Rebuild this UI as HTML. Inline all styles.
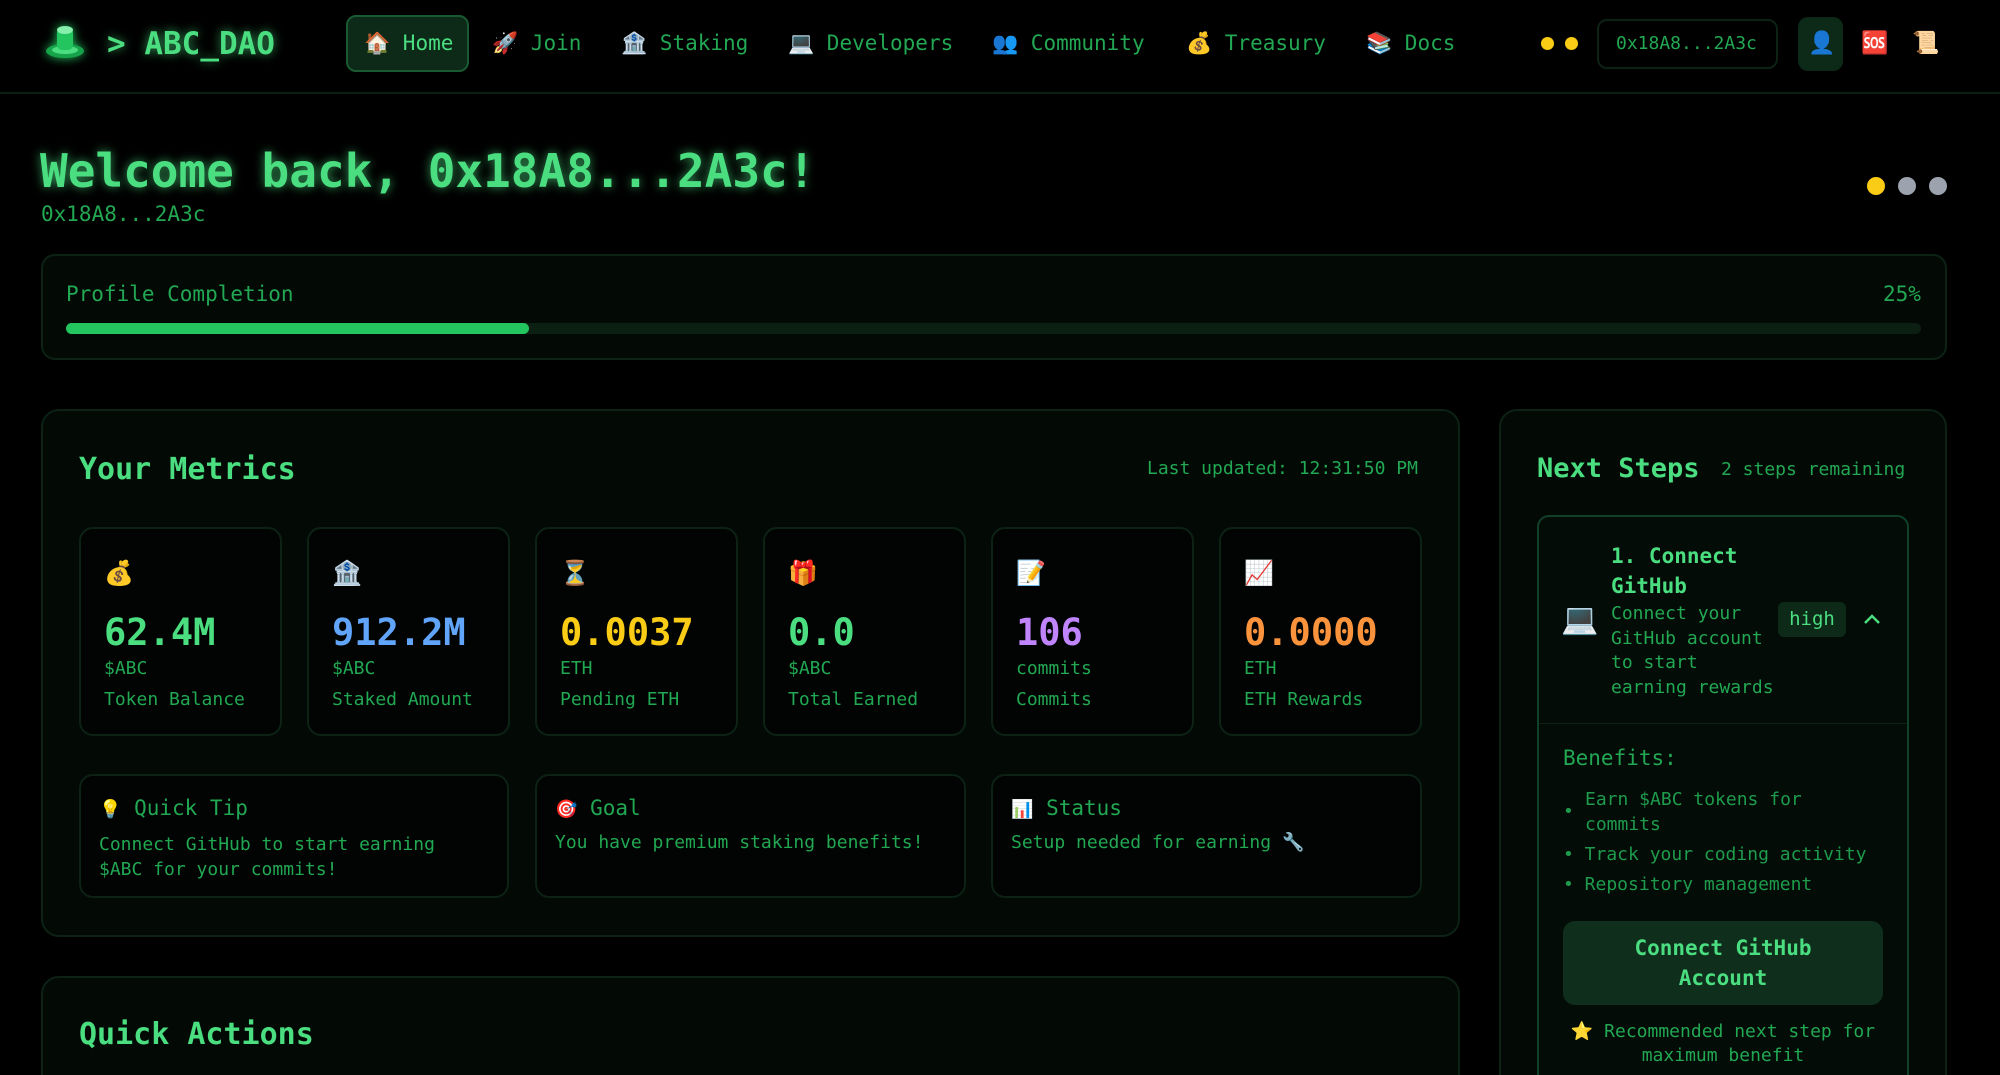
<!DOCTYPE html>
<html><head><meta charset="utf-8"><style>
*{box-sizing:border-box;margin:0;padding:0}
html{width:2000px;height:1075px;overflow:hidden}
body{width:2000px;height:1075px;overflow:hidden;background:#000;font-family:"DejaVu Sans Mono","Liberation Mono",monospace;color:#22a853;position:relative}
.a{position:absolute;white-space:nowrap}
.card{position:absolute;background:#030a06;border:2px solid #0c2215;border-radius:18px}
.tile{position:absolute;background:#010402;border:2px solid #0c2215;border-radius:14px}
.nav{font-size:21px;color:#22a853;top:31px}
.em{font-family:"Noto Color Emoji","DejaVu Sans",sans-serif}
.glow{color:#4ade80;text-shadow:0 0 10px rgba(74,222,128,.7)}
</style></head><body>
<div class="a" style="left:0;top:92px;width:2000px;height:2px;background:#0b1f12"></div>
<svg class="a" style="left:44px;top:24px;filter:drop-shadow(0 0 5px #22c55e)" width="44" height="36" viewBox="0 0 44 36"><ellipse cx="21" cy="27" rx="19" ry="7" fill="#16a34a"/><ellipse cx="21" cy="26" rx="13" ry="4" fill="#4ade80"/><rect x="13" y="4" width="16" height="22" rx="5" fill="#22c55e"/><ellipse cx="21" cy="6" rx="8" ry="4" fill="#86efac"/></svg>
<div class="a glow" style="left:107px;top:26px;font-size:31px;font-weight:bold">&gt; ABC_DAO</div>
<div class="a" style="left:346px;top:15px;width:123px;height:57px;background:#0d2a18;border:2px solid #1a5a32;border-radius:10px"></div>
<div class="a nav" style="left:364px;color:#4ade80"><span class="em">🏠</span> Home</div>
<div class="a nav" style="left:492px"><span class="em">🚀</span> Join</div>
<div class="a nav" style="left:621px"><span class="em">🏦</span> Staking</div>
<div class="a nav" style="left:788px"><span class="em">💻</span> Developers</div>
<div class="a nav" style="left:992px"><span class="em">👥</span> Community</div>
<div class="a nav" style="left:1186px"><span class="em">💰</span> Treasury</div>
<div class="a nav" style="left:1366px"><span class="em">📚</span> Docs</div>
<div class="a" style="left:1541px;top:37px;width:13px;height:13px;border-radius:50%;background:#facc15"></div>
<div class="a" style="left:1565px;top:37px;width:13px;height:13px;border-radius:50%;background:#facc15"></div>
<div class="a" style="left:1597px;top:19px;width:181px;height:50px;border:2px solid #0c2215;border-radius:10px"></div>
<div class="a" style="left:1616px;top:33px;font-size:18px;color:#22a853">0x18A8...2A3c</div>
<div class="a" style="left:1798px;top:17px;width:45px;height:54px;background:#0d2a18;border-radius:10px"></div>
<div class="a em" style="left:1808px;top:31px;font-size:22px">👤</div>
<div class="a em" style="left:1861px;top:31px;font-size:22px">🆘</div>
<div class="a em" style="left:1912px;top:31px;font-size:22px">📜</div>

<div class="a glow" style="left:40px;top:144px;font-size:46px;font-weight:bold">Welcome back, 0x18A8...2A3c!</div>
<div class="a" style="left:41px;top:202px;font-size:21px">0x18A8...2A3c</div>
<div class="a" style="left:1867px;top:177px;width:18px;height:18px;border-radius:50%;background:#facc15"></div>
<div class="a" style="left:1898px;top:177px;width:18px;height:18px;border-radius:50%;background:#9ca3af"></div>
<div class="a" style="left:1929px;top:177px;width:18px;height:18px;border-radius:50%;background:#9ca3af"></div>

<div class="card" style="left:41px;top:254px;width:1906px;height:106px;border-radius:14px"></div>
<div class="a" style="left:66px;top:282px;font-size:21px">Profile Completion</div>
<div class="a" style="left:1883px;top:282px;font-size:21px">25%</div>
<div class="a" style="left:66px;top:323px;width:1855px;height:11px;background:#0b1f12;border-radius:6px"></div>
<div class="a" style="left:66px;top:323px;width:463px;height:11px;background:#22c55e;border-radius:6px"></div>

<div class="card" style="left:41px;top:409px;width:1419px;height:528px"></div>
<div class="a" style="left:79px;top:452px;font-size:30px;font-weight:bold;color:#4ade80">Your Metrics</div>
<div class="a" style="left:1147px;top:458px;font-size:18px">Last updated: 12:31:50 PM</div>

<div class="tile" style="left:79px;top:527px;width:203px;height:209px"></div>
<div class="tile" style="left:307px;top:527px;width:203px;height:209px"></div>
<div class="tile" style="left:535px;top:527px;width:203px;height:209px"></div>
<div class="tile" style="left:763px;top:527px;width:203px;height:209px"></div>
<div class="tile" style="left:991px;top:527px;width:203px;height:209px"></div>
<div class="tile" style="left:1219px;top:527px;width:203px;height:209px"></div>

<div class="a em" style="left:104px;top:559px;font-size:24px">💰</div>
<div class="a" style="left:104px;top:611px;font-size:37px;font-weight:bold;color:#4ade80">62.4M</div>
<div class="a" style="left:104px;top:658px;font-size:18px">$ABC</div>
<div class="a" style="left:104px;top:689px;font-size:18px">Token Balance</div>

<div class="a em" style="left:332px;top:559px;font-size:24px">🏦</div>
<div class="a" style="left:332px;top:611px;font-size:37px;font-weight:bold;color:#60a5fa">912.2M</div>
<div class="a" style="left:332px;top:658px;font-size:18px">$ABC</div>
<div class="a" style="left:332px;top:689px;font-size:18px">Staked Amount</div>

<div class="a em" style="left:560px;top:559px;font-size:24px">⏳</div>
<div class="a" style="left:560px;top:611px;font-size:37px;font-weight:bold;color:#facc15">0.0037</div>
<div class="a" style="left:560px;top:658px;font-size:18px">ETH</div>
<div class="a" style="left:560px;top:689px;font-size:18px">Pending ETH</div>

<div class="a em" style="left:788px;top:559px;font-size:24px">🎁</div>
<div class="a" style="left:788px;top:611px;font-size:37px;font-weight:bold;color:#4ade80">0.0</div>
<div class="a" style="left:788px;top:658px;font-size:18px">$ABC</div>
<div class="a" style="left:788px;top:689px;font-size:18px">Total Earned</div>

<div class="a em" style="left:1016px;top:559px;font-size:24px">📝</div>
<div class="a" style="left:1016px;top:611px;font-size:37px;font-weight:bold;color:#c084fc">106</div>
<div class="a" style="left:1016px;top:658px;font-size:18px">commits</div>
<div class="a" style="left:1016px;top:689px;font-size:18px">Commits</div>

<div class="a em" style="left:1244px;top:559px;font-size:24px">📈</div>
<div class="a" style="left:1244px;top:611px;font-size:37px;font-weight:bold;color:#fb923c">0.0000</div>
<div class="a" style="left:1244px;top:658px;font-size:18px">ETH</div>
<div class="a" style="left:1244px;top:689px;font-size:18px">ETH Rewards</div>

<div class="tile" style="left:79px;top:774px;width:430px;height:124px"></div>
<div class="tile" style="left:535px;top:774px;width:431px;height:124px"></div>
<div class="tile" style="left:991px;top:774px;width:431px;height:124px"></div>
<div class="a" style="left:99px;top:796px;font-size:21px"><span class="em" style="font-size:18px">💡</span> Quick Tip</div>
<div class="a" style="left:99px;top:832px;font-size:18px;line-height:25px">Connect GitHub to start earning<br>$ABC for your commits!</div>
<div class="a" style="left:555px;top:796px;font-size:21px"><span class="em" style="font-size:18px">🎯</span> Goal</div>
<div class="a" style="left:555px;top:832px;font-size:18px">You have premium staking benefits!</div>
<div class="a" style="left:1011px;top:796px;font-size:21px"><span class="em" style="font-size:18px">📊</span> Status</div>
<div class="a" style="left:1011px;top:832px;font-size:18px">Setup needed for earning <span class="em">🔧</span></div>

<div class="card" style="left:41px;top:976px;width:1419px;height:140px"></div>
<div class="a" style="left:79px;top:1017px;font-size:30px;font-weight:bold;color:#4ade80">Quick Actions</div>

<div class="card" style="left:1499px;top:409px;width:448px;height:700px"></div>
<div class="a" style="left:1537px;top:453px;font-size:27px;font-weight:bold;color:#4ade80">Next Steps</div>
<div class="a" style="left:1721px;top:459px;font-size:18px">2 steps remaining</div>
<div class="a" style="left:1537px;top:515px;width:372px;height:600px;border:2px solid #11402a;border-radius:12px;background:#040c07"></div>
<div class="a" style="left:1539px;top:723px;width:368px;height:1px;background:#0c2215"></div>
<div class="a em" style="left:1561px;top:602px;font-size:30px">💻</div>
<div class="a" style="left:1611px;top:541px;font-size:21px;font-weight:bold;color:#4ade80;line-height:30px">1. Connect<br>GitHub</div>
<div class="a" style="left:1611px;top:602px;font-size:18px;line-height:24.5px">Connect your<br>GitHub account<br>to start<br>earning rewards</div>
<div class="a" style="left:1778px;top:602px;width:68px;height:35px;background:#0d2a18;border-radius:6px;font-size:19px;color:#4ade80;text-align:center;line-height:35px">high</div>
<svg class="a" style="left:1862px;top:612px" width="20" height="14" viewBox="0 0 20 14"><path d="M3 11 L10 4 L17 11" stroke="#4ade80" stroke-width="2.5" fill="none"/></svg>
<div class="a" style="left:1563px;top:746px;font-size:21px">Benefits:</div>
<div class="a" style="left:1563px;top:788px;font-size:18px;line-height:24.5px;color:#1e9b4c"><span style="position:absolute;left:0;top:12px">•</span><span style="position:absolute;left:22px;top:0">Earn $ABC tokens for<br>commits</span></div>
<div class="a" style="left:1563px;top:844px;font-size:18px;color:#1e9b4c">• Track your coding activity</div>
<div class="a" style="left:1563px;top:874px;font-size:18px;color:#1e9b4c">• Repository management</div>
<div class="a" style="left:1563px;top:921px;width:320px;height:84px;background:#0f2e1c;border-radius:12px;font-size:21px;font-weight:bold;color:#4ade80;text-align:center;line-height:30px;padding-top:12px;white-space:normal">Connect GitHub<br>Account</div>
<div class="a" style="left:1563px;top:1020px;width:320px;font-size:18px;text-align:center;line-height:24px;white-space:normal"><span class="em">⭐</span> Recommended next step for maximum benefit</div>
</body></html>
